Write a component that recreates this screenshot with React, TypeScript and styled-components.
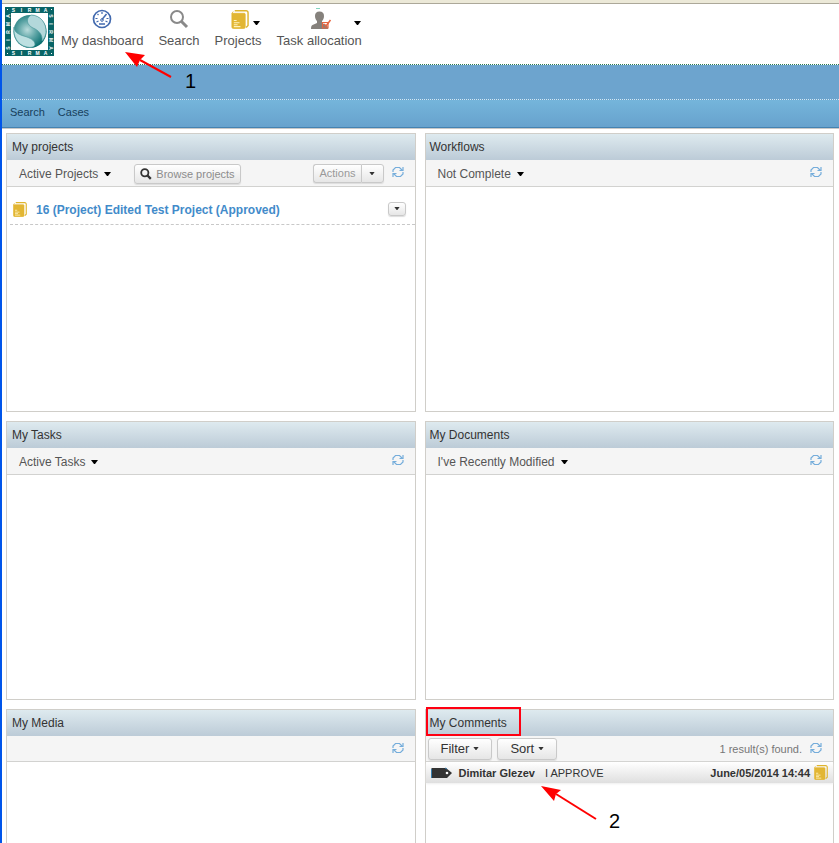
import React from "react";
import styled, { createGlobalStyle } from "styled-components";

const GlobalStyle = createGlobalStyle`
  * { box-sizing: border-box; }
  body { margin: 0; background: #fff; font-family: "Liberation Sans", Arial, sans-serif; font-size: 12px; color: #333; }
  button { font-family: inherit; margin: 0; }
  a { color: inherit; text-decoration: none; }
  svg { display: block; flex: none; }
`;

const Page = styled.div`
  position: relative;
  height: 100vh;
  overflow-x: hidden;
  overflow-y: auto;
  scrollbar-width: none;
  border-left: 2px solid #0055ea;
`;
const Chrome = styled.div`
  height: 4px;
  background: #ece9d8;
  border-bottom: 1px solid #aca899;
`;
const Header = styled.header`
  display: flex;
  align-items: flex-start;
  height: 61px;
  padding: 3px 3px 0;
  border-bottom: 1px dotted #2b7a50;
`;
const MainNav = styled.nav`
  display: flex;
  gap: 15px;
  padding-left: 7px;
`;
const NavItem = styled.a`
  display: flex;
  flex-direction: column;
  align-items: center;
  color: #555;
  font-size: 13px;
  line-height: 16px;
`;
const NavIcon = styled.span<{ $gap?: number; $indent?: number }>`
  display: flex;
  align-items: center;
  gap: ${(p) => p.$gap ?? 0}px;
  height: 26px;
  padding: 0 0 2px ${(p) => p.$indent ?? 0}px;
  color: #000;
`;
const NavCaret = styled.span`
  padding-top: 7px;
`;
const Band = styled.div`
  height: 34px;
  background: #6da4ce;
`;
const SubNav = styled.nav`
  display: flex;
  gap: 13px;
  height: 29px;
  padding: 0 8px 3px;
  align-items: center;
  border-top: 1px dotted #d5e8f4;
  border-bottom: 1px solid #4482b1;
  background: linear-gradient(#75b5db, #67a2cd);
  color: #17405c;
  font-size: 11px;
  box-shadow: 0 1px #c8c8c8;
`;
const Dashboard = styled.main`
  display: grid;
  grid-template-columns: repeat(2, minmax(0, 1fr));
  gap: 9px;
  padding: 5px 5px 9px 4px;
`;
const PanelBox = styled.section`
  min-height: 279px;
  border: 1px solid #d0cec9;
  background: #fff;
`;
const PanelTitle = styled.h2`
  margin: 0;
  padding: 0 4px 0 5px;
  font-size: 12px;
  font-weight: normal;
  line-height: 26px;
  color: #333;
  background: linear-gradient(#deeaef, #bccbd7);
  ${PanelBox}:nth-child(even) > & { padding-left: 4px; }
`;
const Toolbar = styled.div<{ $compact?: boolean }>`
  display: flex;
  align-items: center;
  height: ${(p) => (p.$compact ? "26px" : "27px")};
  padding: 0 11px 0 ${(p) => (p.$compact ? "2px" : "12px")};
  background: #f5f5f5;
  border-bottom: 1px solid #d2d2d0;
`;
const MenuButton = styled.button`
  display: flex;
  align-items: center;
  gap: 6px;
  padding: 1px 0 0;
  border: 0;
  background: none;
  color: #555;
  font-size: 12px;
  & > svg { color: #000; }
`;
const Button = styled.button<{ $size?: "small" | "tiny" }>`
  display: flex;
  align-items: center;
  justify-content: center;
  gap: 4px;
  height: ${(p) => (p.$size === "tiny" ? "14px" : p.$size === "small" ? "20px" : "22px")};
  padding: 0 ${(p) => (p.$size ? "5px" : "12px")};
  border: 1px solid #c9c9c9;
  border-radius: 3px;
  background: linear-gradient(#fff, #e6e6e6);
  box-shadow: 0 1px 1px #ddd;
  color: ${(p) => (p.$size ? "#8c8c8c" : "#333")};
  font-size: ${(p) => (p.$size ? "11px" : "13px")};
  white-space: nowrap;
`;
const BrowseButton = styled(Button)`
  margin: 1px 0 0 23px;
`;
const SplitButton = styled.div`
  display: flex;
  & > button { color: #999; height: 19px; }
  & > button:first-child { border-radius: 3px 0 0 3px; border-right: 0; }
  & > button:last-child { border-radius: 0 3px 3px 0; width: 23px; color: #333; }
`;
const RowMenu = styled(Button)`
  width: 18px;
  padding: 0;
  margin-bottom: 2px;
  color: #333;
`;
const ToolbarEnd = styled.div`
  display: flex;
  align-items: center;
  gap: 8px;
  margin-left: auto;
  color: #777;
  font-size: 11px;
`;
const IconButton = styled.button`
  display: flex;
  padding: 0 0 2px;
  border: 0;
  background: none;
`;
const ButtonGroup = styled.div`
  display: flex;
  gap: 5px;
`;
const ProjectRow = styled.div`
  display: flex;
  align-items: center;
  height: 30px;
  margin: 8px 0 0 3px;
  padding: 0 9px 0 2px;
  border-bottom: 1px dashed #c8c8c8;
`;
const ProjectLink = styled.a`
  margin: 0 auto 0 9px;
  color: #428bca;
  font-size: 12px;
  font-weight: bold;
  white-space: nowrap;
`;
const CommentRow = styled.article`
  display: flex;
  align-items: center;
  height: 21px;
  padding: 0 5px;
  background: linear-gradient(#fff, #dfdfdf);
  box-shadow: 0 1px 2px #eee;
  color: #333;
  font-size: 11px;
  white-space: nowrap;
`;
const Author = styled.strong`
  margin: 0 10px 0 7px;
`;
const CommentDate = styled.time`
  margin: 0 3px 0 auto;
  font-weight: bold;
`;
const Highlight = styled.div`
  position: absolute;
  left: 424px;
  top: 707px;
  width: 95px;
  height: 29px;
  border: 2px solid #ff0012;
`;
const Callout = styled.div<{ $x: number; $y: number }>`
  position: absolute;
  left: ${(p) => p.$x}px;
  top: ${(p) => p.$y}px;
  display: flex;
  align-items: flex-start;
  gap: 12px;
  color: #000;
  font-size: 20px;
  line-height: 20px;
  pointer-events: none;
`;
const CalloutNumber = styled.span<{ $drop: number }>`
  padding-top: ${(p) => p.$drop}px;
`;

const Caret = ({ small = false }: { small?: boolean }) => (
  <svg width={small ? 6 : 7} height={small ? 3 : 4} viewBox="0 0 7 4" aria-hidden="true">
    <path d="M0 0h7L4 4H3z" fill="currentColor" />
  </svg>
);

const Logo = () => {
  const letters = ["S", "I", "R", "M", "A"];
  return (
    <svg width="49" height="49" viewBox="0 0 49 49" role="img" aria-label="Sirma">
      <defs>
        <radialGradient id="orb" cx=".42" cy=".45" r=".6">
          <stop offset="0" stopColor="#b9dcdc" />
          <stop offset=".45" stopColor="#5fa6a7" />
          <stop offset="1" stopColor="#00696b" />
        </radialGradient>
      </defs>
      <rect width="49" height="49" fill="#086466" />
      <rect x="6" y="6" width="37" height="37" fill="#fff" />
      <circle cx="25" cy="24.500" r="16.500" fill="url(#orb)" />
      <path d="M26 8c9 0 16 8 15 18-1 4-2 6-4 8 1-7-4-11-9-13-6-3-8-9-2-13z" fill="#b3d8db" stroke="#4c9a9c" strokeWidth=".7" />
      <path d="M9 20c-1 9 3 18 13 20 4 1 7 0 8-2 0-4-3-6-8-8-7-2-13-4-13-10z" fill="#bde0e1" stroke="#4c9a9c" strokeWidth=".7" />
      {letters.map((c, i) => (
        <g key={c} fill="#fff" fontSize="5" fontWeight="bold" textAnchor="middle">
          <text x={8.5 + i * 8} y="5">{c}</text>
          <text x={8.5 + i * 8} y="48">{c}</text>
          <text transform={`translate(5 ${41 - i * 8}) rotate(-90)`}>{c}</text>
          <text transform={`translate(44 ${9 + i * 8}) rotate(90)`}>{c}</text>
        </g>
      ))}
      <path d="M2 2h1v1H2zM46 2h1v1h-1zM2 46h1v1H2zM46 46h1v1h-1z" fill="#fff" />
    </svg>
  );
};

const Gauge = () => (
  <svg width="20" height="20" viewBox="0 0 20 20" fill="none" stroke="#4169ae" aria-hidden="true">
    <circle cx="10" cy="10" r="8.500" strokeWidth="1.700" />
    <path d="M10 3v2M5.500 5l1 1M3.500 9.500h2M14.500 9.500h2M4.500 13l2-1M13.500 12l2 1" strokeWidth="1.200" />
    <path d="M14.500 5L10 10.500" strokeWidth="1.500" />
    <circle cx="10" cy="11" r="1.300" />
    <path d="M7 15h6" strokeWidth="1.500" />
  </svg>
);

const Magnifier = ({ size, color, weight }: { size: number; color: string; weight: number }) => (
  <svg width={size} height={size} viewBox="0 0 20 20" fill="none" stroke={color} strokeWidth={weight} aria-hidden="true">
    <circle cx="8" cy="8" r="6" />
    <path d="M12.500 12.500l5.500 5.500" strokeWidth={weight + 1} />
  </svg>
);

const Book = ({ size = 15 }: { size?: number }) => (
  <svg width={size} height={size} viewBox="0 0 20 20" aria-hidden="true">
    <path d="M5 .8h12a2 2 0 012 2v13.500l-2 2" fill="none" stroke="#dfb52e" strokeWidth="1.500" />
    <path d="M3.500 1.500L2 3.500h13a1 1 0 011 1v13.500a1.500 1.500 0 01-1.500 1.500h-11A1.500 1.500 0 012 18V3.500" fill="#e2b633" stroke="#e2b633" strokeWidth=".8" />
    <path d="M4 11h3M4 13.500h6M4 15.500h4M4 17.500h7" stroke="#fff2bd" strokeWidth="1.100" />
  </svg>
);

const Person = () => (
  <svg width="22" height="22" viewBox="0 0 22 22" aria-hidden="true">
    <path d="M6 .5h4" stroke="#83d4bf" />
    <path d="M5 8c0-3 1.500-4.500 4.500-4.500S14 5 14 8c0 2.500-1 4-2 5v2l4 2c1.500.5 2 1.500 2 4H1c0-2.500.5-3.500 1.500-4L7 15v-2c-1-1-2-2.500-2-5z" fill="#85817c" />
    <path d="M18 14.500V20h-5.500v-5.500H18" fill="none" stroke="#e76540" strokeWidth="1.200" />
    <path d="M14 16l2 2 4.500-6" fill="none" stroke="#e76540" strokeWidth="1.500" />
  </svg>
);

const Refresh = () => (
  <IconButton type="button" aria-label="Refresh">
    <svg width="12" height="12" viewBox="0 0 12 12" fill="none" stroke="#75addb" strokeWidth="1.200" aria-hidden="true">
      <path d="M1 6V4l2.500-2.500h4L10 4M11 1v3.500H7.500M11 6v2l-2.500 2.500h-4L2 8M1 11V7.500h3.500" />
    </svg>
  </IconButton>
);

const Tag = () => (
  <svg width="21" height="12" viewBox="0 0 21 12" aria-hidden="true">
    <path d="M0 2l1-1h14l6 5-5 5H0z" fill="#333" />
    <path d="M.5 2v9M14 1l2 1" stroke="#397fae" />
    <circle cx="16" cy="6" r="1.300" fill="#fff" />
  </svg>
);

const Arrow = () => (
  <svg width="56" height="34" viewBox="0 0 56 34" aria-hidden="true">
    <path d="M15 8l40 25" stroke="#f00" strokeWidth="2" />
    <path d="M0 0l20 4-5 4-2 7z" fill="#f00" />
  </svg>
);

const SmallArrow = () => (
  <svg width="48" height="27" viewBox="0 0 48 27" aria-hidden="true">
    <path d="M15 8l31 17" stroke="#f00" strokeWidth="2" />
    <path d="M0 0l20 3-5 5-3 7z" fill="#f00" />
  </svg>
);

type PanelProps = {
  title: string;
  filter?: string;
  tools?: React.ReactNode;
  end?: React.ReactNode;
  compact?: boolean;
  children?: React.ReactNode;
};

const Panel = ({ title, filter, tools, end, compact, children }: PanelProps) => (
  <PanelBox>
    <PanelTitle>{title}</PanelTitle>
    <Toolbar $compact={compact}>
      {filter && <MenuButton type="button">{filter}<Caret /></MenuButton>}
      {tools}
      <ToolbarEnd>{end}<Refresh /></ToolbarEnd>
    </Toolbar>
    {children}
  </PanelBox>
);

export default function App() {
  return (
    <Page>
      <GlobalStyle />
      <Chrome />
      <Header>
        <a href="#home"><Logo /></a>
        <MainNav aria-label="Main">
          <NavItem href="#dashboard"><NavIcon><Gauge /></NavIcon>My dashboard</NavItem>
          <NavItem href="#search"><NavIcon><Magnifier size={20} color="#898989" weight={2} /></NavIcon>Search</NavItem>
          <NavItem href="#projects">
            <NavIcon $gap={4} $indent={14}><Book size={19} /><NavCaret><Caret /></NavCaret></NavIcon>
            Projects
          </NavItem>
          <NavItem href="#tasks">
            <NavIcon $gap={22} $indent={32}><Person /><NavCaret><Caret /></NavCaret></NavIcon>
            Task allocation
          </NavItem>
        </MainNav>
      </Header>
      <Band />
      <SubNav aria-label="Secondary">
        <a href="#search">Search</a>
        <a href="#cases">Cases</a>
      </SubNav>
      <Dashboard>
        <Panel
          title="My projects"
          filter="Active Projects"
          tools={
            <BrowseButton type="button" $size="small">
              <Magnifier size={12} color="#333" weight={3} />Browse projects
            </BrowseButton>
          }
          end={
            <SplitButton>
              <Button type="button" $size="small">Actions</Button>
              <Button type="button" $size="small" aria-label="More actions"><Caret small /></Button>
            </SplitButton>
          }
        >
          <ProjectRow>
            <Book />
            <ProjectLink href="#project-16">16 (Project) Edited Test Project (Approved)</ProjectLink>
            <RowMenu type="button" $size="tiny" aria-label="Project actions"><Caret small /></RowMenu>
          </ProjectRow>
        </Panel>
        <Panel title="Workflows" filter="Not Complete" />
        <Panel title="My Tasks" filter="Active Tasks" />
        <Panel title="My Documents" filter="I've Recently Modified" />
        <Panel title="My Media" compact />
        <Panel
          title="My Comments"
          compact
          tools={
            <ButtonGroup>
              <Button type="button">Filter<Caret small /></Button>
              <Button type="button">Sort<Caret small /></Button>
            </ButtonGroup>
          }
          end={<span>1 result(s) found.</span>}
        >
          <CommentRow>
            <Tag />
            <Author>Dimitar Glezev</Author>
            <span>I APPROVE</span>
            <CommentDate dateTime="2014-06-05T14:44">June/05/2014 14:44</CommentDate>
            <Book />
          </CommentRow>
        </Panel>
      </Dashboard>
      <Highlight />
      <Callout $x={123} $y={52}><SmallArrow /><CalloutNumber $drop={19}>1</CalloutNumber></Callout>
      <Callout $x={539} $y={786}><Arrow /><CalloutNumber $drop={25}>2</CalloutNumber></Callout>
    </Page>
  );
}
